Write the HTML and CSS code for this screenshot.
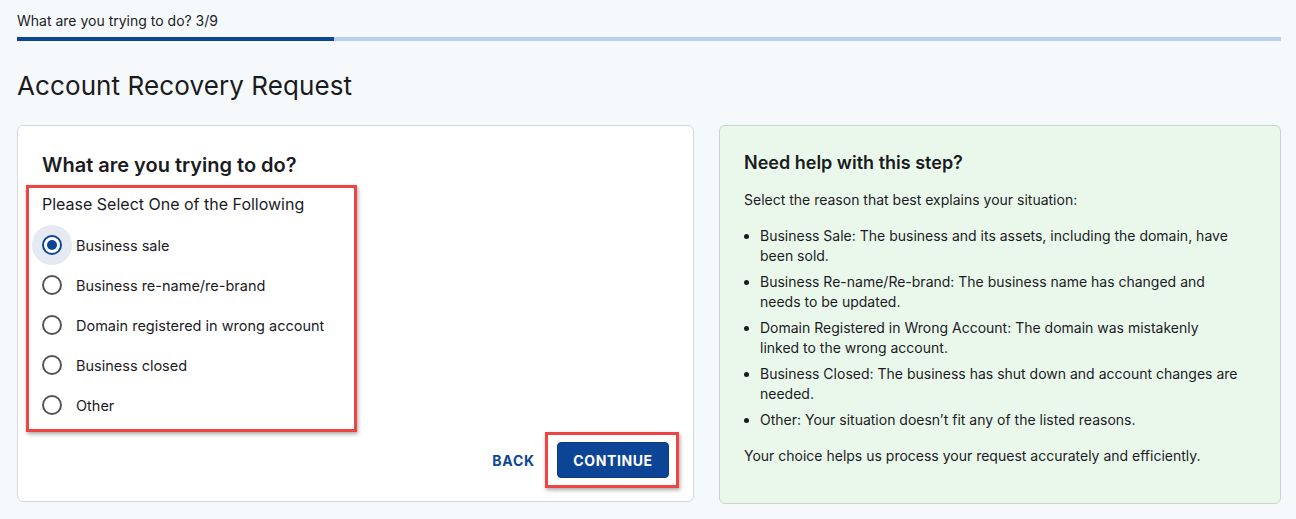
FILE: index.html
```html
<!DOCTYPE html>
<html lang="en">
<head>
  <meta charset="UTF-8">
  <meta name="viewport" content="width=device-width, initial-scale=1.0">
  <title>Account Recovery Request</title>
  <link rel="stylesheet" href="styles.css">
</head>
<body>
  <div class="page">
    <div class="step-label">What are you trying to do? 3/9</div>
    <div class="progress">
      <div class="progress-fill" style="width: 25.1%"></div>
    </div>

    <h1 class="title">Account Recovery Request</h1>

    <div class="columns">
      <div class="card">
        <h2 class="card-title">What are you trying to do?</h2>
        <div class="choice-group highlight">
          <div class="choice-legend">Please Select One of the Following</div>
          <label class="choice">
            <span class="radio checked"></span>
            <span>Business sale</span>
          </label>
          <label class="choice">
            <span class="radio"></span>
            <span>Business re-name/re-brand</span>
          </label>
          <label class="choice">
            <span class="radio"></span>
            <span>Domain registered in wrong account</span>
          </label>
          <label class="choice">
            <span class="radio"></span>
            <span>Business closed</span>
          </label>
          <label class="choice">
            <span class="radio"></span>
            <span>Other</span>
          </label>
        </div>
        <div class="actions">
          <button class="btn-text">BACK</button>
          <div class="highlight btn-wrap">
            <button class="btn-primary">CONTINUE</button>
          </div>
        </div>
      </div>

      <div class="help">
        <h3 class="help-title">Need help with this step?</h3>
        <p class="help-text">Select the reason that best explains your situation:</p>
        <ul class="help-list">
          <li>Business Sale: The business and its assets, including the domain, have been sold.</li>
          <li>Business Re-name/Re-brand: The business name has changed and needs to be updated.</li>
          <li>Domain Registered in Wrong Account: The domain was mistakenly linked to the wrong account.</li>
          <li>Business Closed: The business has shut down and account changes are needed.</li>
          <li>Other: Your situation doesn’t fit any of the listed reasons.</li>
        </ul>
        <p class="help-text">Your choice helps us process your request accurately and efficiently.</p>
      </div>
    </div>
  </div>
</body>
</html>
```

FILE: styles.css
```css
body {
  margin: 0;
  background-color: #f5f9fc;
  font-family: Inter, "Noto Sans", sans-serif;
  color: #1b1b1f;
}
.page {
  padding: 12px 15px 0 17px;
}
.step-label {
  font-size: 14px;
  line-height: 18px;
}
.progress {
  margin-top: 7px;
  height: 4px;
  background-color: #b8d1f3;
}
.progress-fill {
  height: 100%;
  background-color: #0d4596;
}
.title {
  margin: 28px 0 0;
  font-size: 26px;
  font-weight: 400;
  line-height: 34px;
  letter-spacing: 0.1px;
}
.columns {
  display: grid;
  grid-template-columns: 677px 1fr;
  gap: 25px;
  margin-top: 22px;
}
.card {
  background-color: #fff;
  border: 1px solid #d4d8de;
  border-radius: 6px;
  height: 375px;
  padding: 0 24px;
  display: flex;
  flex-direction: column;
}
.card-title {
  margin: 26px 0 0;
  font-size: 20px;
  font-weight: 600;
  line-height: 26px;
}
.highlight {
  border: 3px solid #ef4444;
  box-shadow: 1px 2px 4px rgba(0, 0, 0, 0.35);
}
.choice-group {
  width: 312px;
  margin: 7px 0 0 -16px;
  padding: 6px 0 4px 13px;
}
.choice-legend {
  font-size: 16px;
  line-height: 20px;
  margin-bottom: 11px;
}
.choice {
  display: flex;
  align-items: center;
  height: 40px;
  font-size: 14.5px;
  cursor: pointer;
}
.radio {
  position: relative;
  width: 16px;
  height: 16px;
  border: 2px solid #555;
  border-radius: 50%;
  margin-right: 14px;
  flex: none;
}
.radio.checked {
  border-color: #0d4596;
  box-shadow: 0 0 0 10px #e4e9f2;
  background-color: #fff;
}
.radio.checked::after {
  content: "";
  position: absolute;
  left: 3px;
  top: 3px;
  width: 10px;
  height: 10px;
  border-radius: 50%;
  background-color: #0d4596;
}
.actions {
  display: flex;
  justify-content: flex-end;
  align-items: center;
  gap: 8px;
  margin-right: -10px;
}
.btn-text {
  background: none;
  border: none;
  font-family: inherit;
  font-size: 14px;
  font-weight: 700;
  letter-spacing: 0.8px;
  color: #0d4596;
  padding: 8px 2px;
  cursor: pointer;
}
.btn-wrap {
  padding: 7px 7px 7px 9px;
}
.btn-primary {
  display: block;
  background-color: #0d4596;
  color: #fff;
  border: 1px solid #0a3a80;
  border-radius: 4px;
  font-family: inherit;
  font-size: 14px;
  font-weight: 700;
  letter-spacing: 0.6px;
  width: 112px;
  height: 36px;
  cursor: pointer;
}
.help {
  background-color: #eaf8ec;
  border: 1px solid #cdd2cf;
  border-radius: 6px;
  height: 377px;
  padding: 0 24px;
}
.help-title {
  margin: 25px 0 0;
  font-size: 18px;
  font-weight: 600;
  line-height: 24px;
}
.help-text {
  margin: 15px 0 0;
  font-size: 14px;
  line-height: 20px;
}
.help-list {
  margin: 16px 0 0;
  padding-left: 16px;
  font-size: 14px;
  line-height: 20px;
}
.help-list li {
  margin-bottom: 6px;
  padding-right: 17px;
}
.help-list + .help-text {
  margin-top: 16px;
}
```
